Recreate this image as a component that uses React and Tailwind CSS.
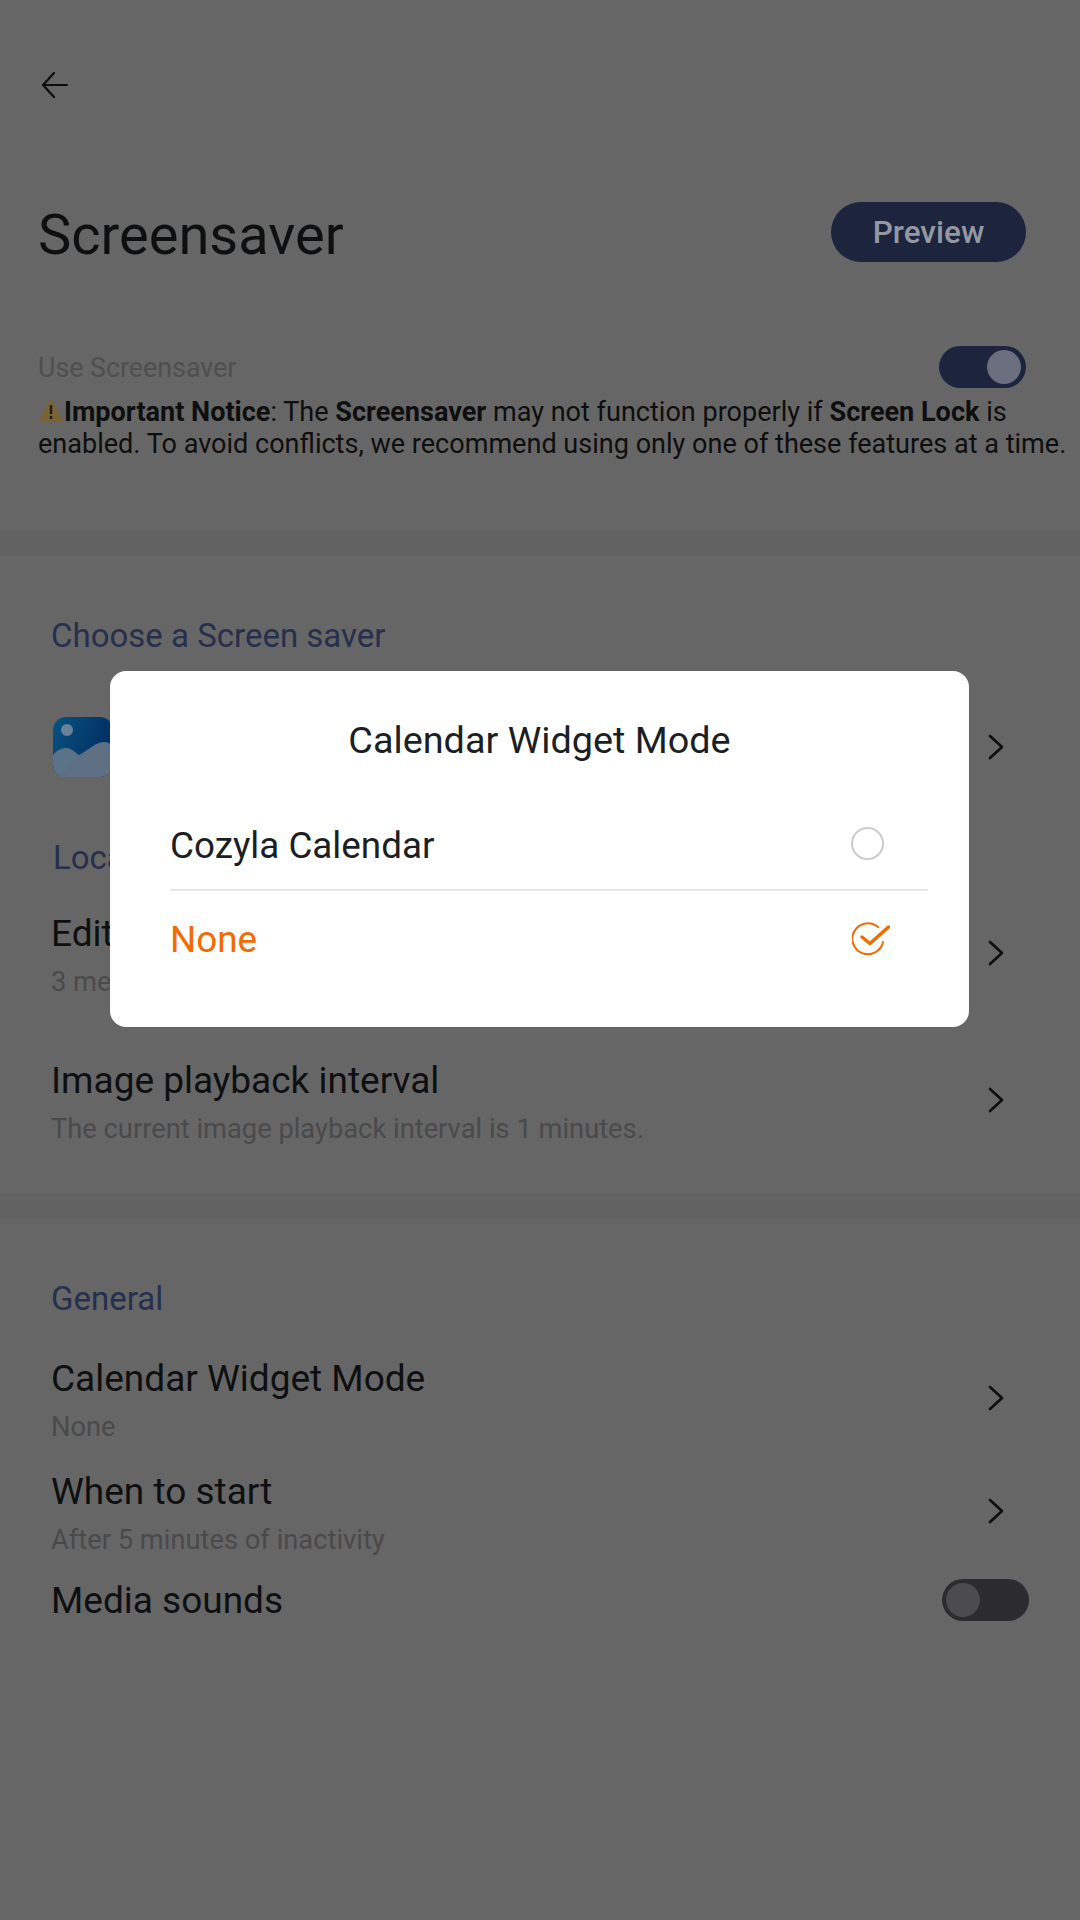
import React from 'react';

const Chevron = ({ className }) => (
  <svg width="16" height="26" viewBox="0 0 16 26" fill="none" className={`shrink-0 ${className || ''}`}>
    <path d="M2 2l12 11L2 24" stroke="#0d0d0d" strokeWidth="2.6" strokeLinecap="round" strokeLinejoin="round" />
  </svg>
);

const Row = ({ title, sub, className }) => (
  <div className={`flex h-[96px] items-center justify-between pl-[51px] pr-[76px] ${className}`}>
    <div>
      <p className="text-[37px] leading-[48px] text-[#0e0f10]">{title}</p>
      <p className="text-[27.3px] leading-[48px] text-[#4a4a4a]">{sub}</p>
    </div>
    <Chevron className="mb-[11px]" />
  </div>
);

const Heading = ({ children, className }) => (
  <h2 className={`text-[33px] leading-[40px] text-[#26304c] ${className}`}>{children}</h2>
);

const WarningIcon = () => (
  <svg width="26" height="24" viewBox="0 0 26 24" className="inline-block align-[-1px]">
    <path d="M13 0L26 24H0z" fill="#7a6335" />
    <path d="M13 7v9M13 18v3" stroke="#1c1c1c" strokeWidth="2.4" />
  </svg>
);

const PhotoIcon = () => (
  <svg width="60" height="60" viewBox="0 0 60 60" className="shrink-0">
    <defs>
      <linearGradient id="sky" x1="0" y1="0" x2="1" y2="0.4">
        <stop offset="0" stopColor="#08527f" />
        <stop offset="1" stopColor="#002e63" />
      </linearGradient>
    </defs>
    <rect width="60" height="60" rx="13" fill="url(#sky)" />
    <circle cx="14" cy="13" r="6" fill="#6a8298" />
    <path d="M0 38c4-5 9-7 13-7 5 0 9 4 14 8L10 60A13 13 0 0 1 0 47z" fill="#5a7389" />
    <path d="M7 60l18-21 15-10c6-4 12-5 16-3l4 3v18a13 13 0 0 1-13 13z" fill="#5f6f83" />
  </svg>
);

const App = () => {
  return (
    <div className="relative h-[1920px] w-[1080px] overflow-hidden bg-[#666666] font-['Roboto',sans-serif]">
      {/* top */}
      <div className="h-[530px] pl-[38px] pr-[54px]">
        <div className="flex h-[168px] items-center pt-[2px]">
          <svg width="28" height="28" viewBox="0 0 28 28" fill="none" className="ml-[3px]">
            <path d="M26 14H2M13 2L2 14l11 12" stroke="#0d0d0d" strokeWidth="2.2" strokeLinecap="round" strokeLinejoin="round" />
          </svg>
        </div>
        <div className="mt-[34px] flex h-[60px] items-center justify-between">
          <h1 className="pt-[5px] text-[56px] leading-[60px] text-[#0e0f10]">Screensaver</h1>
          <div className="flex h-[60px] w-[195px] items-center justify-center rounded-[30px] bg-[#1c253d] pt-[1px] text-[31.5px] font-medium text-[#9498a3]">
            Preview
          </div>
        </div>
        <div className="mt-[84px] flex h-[42px] items-center justify-between">
          <span className="pt-[2px] text-[26.8px] text-[#4f4f4f]">Use Screensaver</span>
          <div className="flex h-[42px] w-[87px] items-center justify-end rounded-[21px] bg-[#1c253d] pr-[5px]">
            <div className="h-[34px] w-[34px] rounded-full bg-[#6b6e7e]" />
          </div>
        </div>
        <p className="-mr-[54px] mt-[8px] whitespace-nowrap text-[27.05px] leading-[32px] text-[#0e0e0e]">
          <WarningIcon />
          <b className="font-bold">Important Notice</b>: The <b className="font-bold">Screensaver</b> may not function properly if{' '}
          <b className="font-bold">Screen Lock</b> is
          <br />
          enabled. To avoid conflicts, we recommend using only one of these features at a time.
        </p>
      </div>
      <div className="h-[26px] bg-[#626262]" />

      {/* choose */}
      <div className="h-[637px] pt-[60px]">
        <Heading className="ml-[51px]">Choose a Screen saver</Heading>
        <div className="mt-[61px] flex h-[60px] items-center justify-between pl-[53px] pr-[76px]">
          <PhotoIcon />
          <Chevron />
        </div>
        <Heading className="ml-[53px] mt-[61px]">Local</Heading>
        <Row title="Edit" sub="3 media" className="mt-[32px]" />
        <Row title="Image playback interval" sub="The current image playback interval is 1 minutes." className="mt-[51px]" />
      </div>
      <div className="h-[26px] bg-[#626262]" />

      {/* general */}
      <Heading className="ml-[51px] mt-[60px]">General</Heading>
      <Row title="Calendar Widget Mode" sub="None" className="mt-[36px]" />
      <Row title="When to start" sub="After 5 minutes of inactivity" className="mt-[17px]" />
      <div className="mt-[13px] flex h-[48px] items-center justify-between pl-[51px] pr-[51px]">
        <span className="text-[37px] text-[#0e0f10]">Media sounds</span>
        <div className="mb-[3px] flex h-[42px] w-[87px] items-center rounded-[21px] bg-[#2b2b30] pl-[4px]">
          <div className="h-[34px] w-[34px] rounded-full bg-[#4b4b50]" />
        </div>
      </div>

      {/* dialog */}
      <div className="absolute left-[110px] top-[671px] h-[356px] w-[859px] rounded-[16px] bg-white pl-[60px] pr-[41px]">
        <p className="-ml-[19px] pt-[45px] text-center text-[37.8px] leading-[48px] text-[#1b1f24]">Calendar Widget Mode</p>
        <div className="mt-[35px] flex h-[92px] items-center justify-between border-b-2 border-[#e8e8e8] pr-[44px]">
          <span className="pt-[4px] text-[36.8px] text-[#1b1f24]">Cozyla Calendar</span>
          <div className="mb-[2px] h-[33px] w-[33px] rounded-full border-2 border-[#cccccc]" />
        </div>
        <div className="flex h-[98px] items-center justify-between pr-[38px]">
          <span className="text-[36.8px] text-[#f26a00]">None</span>
          <svg width="38" height="36" viewBox="0 0 38 36" fill="none">
            <path d="M31 20a15.5 15.5 0 1 1-5-15" stroke="#f26a00" strokeWidth="2" strokeLinecap="round" />
            <path d="M10 15l8 6.5L36.5 5" stroke="#f26a00" strokeWidth="3.4" strokeLinecap="round" strokeLinejoin="round" />
          </svg>
        </div>
      </div>
    </div>
  );
};

export default App;
